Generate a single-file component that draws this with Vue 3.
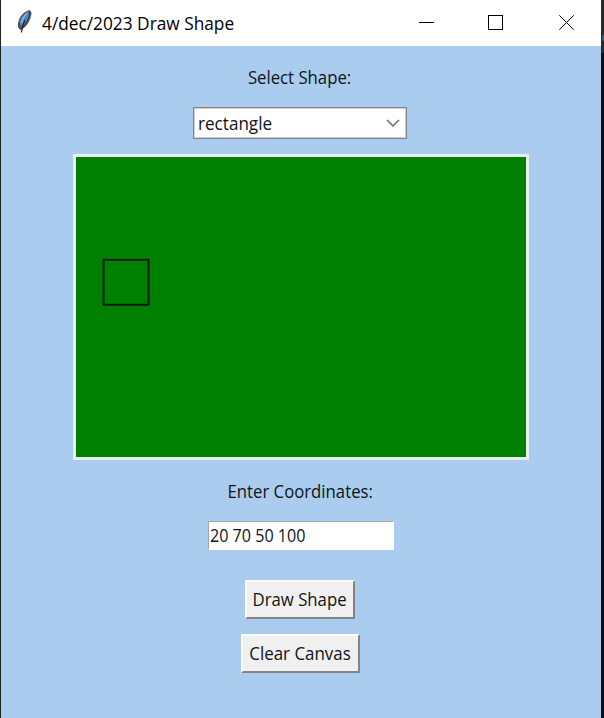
<script setup>
import { ref } from 'vue'

const shape = ref('rectangle')
const coordinates = ref('20 70 50 100')
</script>

<template>
  <div class="desktop">
    <div class="window">
      <header class="titlebar">
        <svg class="feather" width="18" height="26" viewBox="0 0 18 26">
          <path d="M14.800 1.200 C9 2.500 4.400 7.500 3.600 13 L4 19 L6 20.500 C11 18.500 15.500 12 16.300 4 Z" fill="#55585d" stroke="#8b857c" stroke-width="0.800" />
          <path d="M13.600 3 C9 4.500 5.600 9.500 5 15 L6.800 18 C11 15 14 10 14.600 5 Z" fill="#4387cf" />
          <path d="M11.800 4.500 C8.500 7.500 6.800 11 6.300 14" fill="none" stroke="#8fb9ea" stroke-width="1.600" />
          <path d="M15 2.500 C14.500 9 11.500 14.500 7.500 18.500" fill="none" stroke="#23262b" stroke-width="1" />
          <path d="M10 11 C8.500 14 6.800 17.500 6.400 23.500" fill="none" stroke="#18191d" stroke-width="1.100" />
          <path d="M3.800 13.500 V18.500 L6 20.500" fill="none" stroke="#2b2d33" stroke-width="1" />
        </svg>
        <span class="text title">4/dec/2023 Draw Shape</span>
        <svg class="controls" width="157" height="16" viewBox="0 0 157 16" fill="none" stroke="#000" stroke-width="1">
          <path d="M0 7.500 H15" />
          <rect x="69.500" y="0.500" width="14" height="14" />
          <path d="M140.300 0.300 L154.700 14.700 M154.700 0.300 L140.300 14.700" />
        </svg>
      </header>
      <main class="content">
        <div class="label select-label"><span class="text t93">Select Shape:</span></div>
        <div class="combobox">
          <span class="text t95">{{ shape }}</span>
          <svg width="14" height="8" viewBox="0 0 14 8"><path d="M1 1 L7 6.800 L13 1" fill="none" stroke="#747474" stroke-width="1.600" /></svg>
        </div>
        <svg class="canvas" width="450" height="300" viewBox="0 0 450 300">
          <rect x="27.600" y="102.750" width="45" height="45" fill="none" stroke="#001200" stroke-width="1.800" />
        </svg>
        <div class="label enter-label"><span class="text t93">Enter Coordinates:</span></div>
        <div class="entry"><span class="text t89">{{ coordinates }}</span></div>
        <button class="button draw"><span class="text t93">Draw Shape</span></button>
        <button class="button clear"><span class="text t94">Clear Canvas</span></button>
      </main>
    </div>
    <aside class="edge"><i></i></aside>
  </div>
</template>

<style>
body { margin: 0; overflow: hidden; }
</style>

<style scoped>
.desktop {
  box-sizing: border-box;
  display: flex;
  width: 604px;
  height: 718px;
  padding-left: 1px;
  background: #202226;
  font-family: "Open Sans", "Noto Sans", sans-serif;
  font-size: 18px;
  line-height: 24px;
  color: #111318;
}
.window { width: 600px; height: 718px; background: #aaccef; }
.edge { width: 3px; background: linear-gradient(#292929 0 53px, #0c0d0e 53px); }
.edge i { display: block; width: 2px; height: 6px; margin-left: 1px; background: #245b8c; border-radius: 3px 0 0 3px; }
.edge { box-sizing: border-box; padding-top: 35px; }
.titlebar { display: flex; height: 46px; background: #fff; color: #000; }
.feather { flex: none; margin: 9px 0 0 14px; }
.text { display: inline-block; white-space: nowrap; }
.title { flex: none; width: 200px; margin: 11px 0 0 9px; transform: scaleX(.96); transform-origin: left; }
.controls { margin: 15px 0 0 177px; flex: none; }
.content { display: flex; flex-direction: column; align-items: center; }
.label { height: 24px; margin-right: 2px; }
.t93 { transform: scaleX(.93); }
.t94 { transform: scaleX(.94); }
.t95 { transform: scaleX(.95); transform-origin: left; }
.t89 { transform: scaleX(.895); transform-origin: left; }
.select-label { margin-top: 19px; }
.combobox {
  box-sizing: border-box;
  display: flex;
  align-items: center;
  justify-content: space-between;
  width: 214px;
  height: 32px;
  margin-top: 18px;
  margin-right: 2px;
  padding: 0 6px 0 4px;
  border: 1px solid #828487;
  box-shadow: inset 0 0 0 1px #d0d0d0;
  background: #fff;
}
.canvas { margin-top: 15px; border: 3px solid #ebeeee; background: #008000; }
.enter-label { margin-top: 19px; }
.entry {
  box-sizing: border-box;
  width: 186px;
  height: 29px;
  margin-top: 18px;
  padding: 1px 1px;
  border: 1px solid #fff;
  border-top-color: #a5a5a5;
  border-left-color: #a5a5a5;
  background: #fff;
}
.button {
  box-sizing: border-box;
  display: flex;
  align-items: center;
  justify-content: center;
  height: 39px;
  margin-right: 2px;
  padding: 0 0 2px;
  border: 2px solid;
  border-color: #fff #858585 #858585 #fff;
  background: #f0f0f0;
  font: inherit;
  color: inherit;
}
.draw { width: 110px; margin-top: 30px; }
.clear { width: 119px; margin-top: 15px; }
</style>
